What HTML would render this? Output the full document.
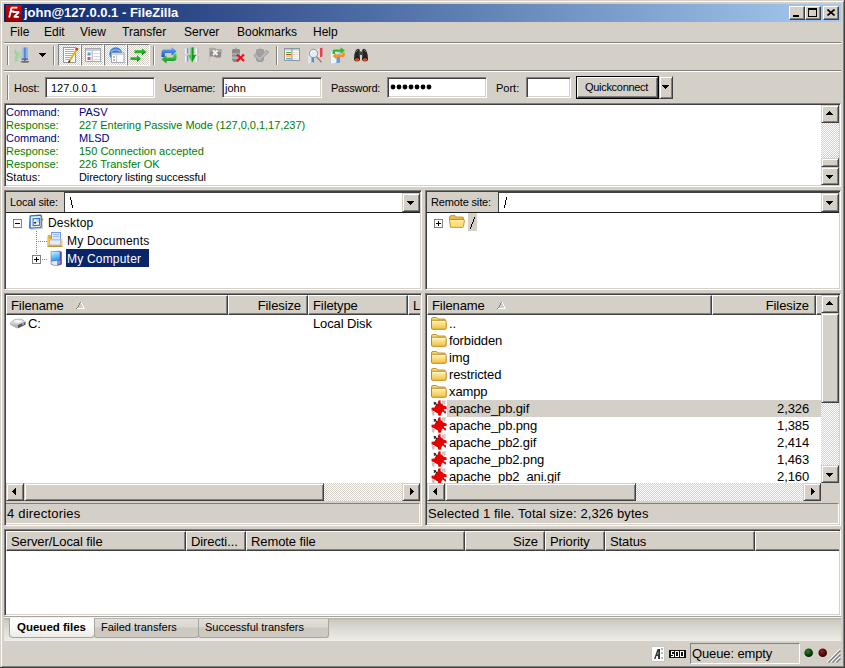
<!DOCTYPE html>
<html><head><meta charset="utf-8">
<style>
*{box-sizing:border-box}
html,body{margin:0;padding:0}
body{width:845px;height:668px;overflow:hidden;background:#D4D0C8;position:relative;font-family:"Liberation Sans",sans-serif;font-size:11px;color:#000}
.a{position:absolute}
.t{position:absolute;white-space:nowrap;line-height:13px}
.sunk{position:absolute;border:1px solid;border-color:#808080 #fff #fff #808080;box-shadow:inset 1px 1px #404040,inset -1px -1px #D4D0C8}
.rais{position:absolute;background:#D4D0C8;border:1px solid;border-color:#D4D0C8 #404040 #404040 #D4D0C8;box-shadow:inset 1px 1px #fff,inset -1px -1px #808080}
.rais2{position:absolute;background:#D4D0C8;border:1px solid;border-color:#fff #404040 #404040 #fff;box-shadow:inset -1px -1px #808080}
.hl{position:absolute;height:2px;border-top:1px solid #808080;border-bottom:1px solid #fff}
.vl{position:absolute;width:2px;border-left:1px solid #808080;border-right:1px solid #fff}
.dith{background-color:#fff;background-image:linear-gradient(45deg,#D4D0C8 25%,transparent 25%,transparent 75%,#D4D0C8 75%),linear-gradient(45deg,#D4D0C8 25%,transparent 25%,transparent 75%,#D4D0C8 75%);background-size:2px 2px;background-position:0 0,1px 1px}
.hdr{position:absolute;top:0;height:20px;background:#D4D0C8;border:1px solid;border-color:#fff #808080 #808080 #fff;box-shadow:inset 0 -1px #808080}
.arr-u{position:absolute;width:0;height:0;border-left:3.5px solid transparent;border-right:3.5px solid transparent;border-bottom:4px solid #000}
svg{position:absolute;display:block}
.hcell{position:absolute;background:#D4D0C8;border:1px solid;border-color:#fff #404040 #404040 #fff;box-shadow:inset -1px -1px #808080}
.hd{font-size:13px;line-height:15px;letter-spacing:-0.1px}
.rw{font-size:13px;line-height:15px;letter-spacing:-0.12px}
</style></head><body>
<!-- window frame -->
<div class="a" style="left:0;top:0;width:845px;height:668px;border-right:1px solid #404040;border-bottom:1px solid #404040"></div>
<div class="a" style="left:1px;top:1px;width:843px;height:666px;border:1px solid;border-color:#fff #808080 #808080 #fff"></div>

<!-- title bar -->
<div class="a" style="left:4px;top:4px;width:837px;height:18px;background:linear-gradient(to right,#0A246A,#A6CAF0)"></div>
<div class="t" style="left:24px;top:5px;font-size:13px;font-weight:bold;color:#fff;line-height:16px">john@127.0.0.1 - FileZilla</div>

<svg style="left:6px;top:5px" width="16" height="16" viewBox="0 0 16 16"><defs><linearGradient id="rg" x1="0" y1="0" x2="0" y2="1"><stop offset="0" stop-color="#d40000"/><stop offset="1" stop-color="#8e0000"/></linearGradient></defs><rect width="16" height="16" fill="url(#rg)"/><path d="M5.6 2.6H11.4M4.9 6.5H8.2M5.6 2.6L3.2 12.4" stroke="#fff" stroke-width="1.9" fill="none"/><path d="M7.2 7H13L8 11.8H12.8" stroke="#fff" stroke-width="1.8" fill="none" stroke-linejoin="bevel"/></svg>
<div class="rais2" style="left:789px;top:6px;width:16px;height:14px"><div class="a" style="left:3px;top:8px;width:6px;height:2px;background:#000"></div></div>
<div class="rais2" style="left:805px;top:6px;width:16px;height:14px"><div class="a" style="left:2px;top:1px;width:9px;height:9px;border:1px solid #000;border-top-width:2px"></div></div>
<div class="rais2" style="left:823px;top:6px;width:16px;height:14px"><svg style="left:3px;top:2px" width="8" height="7" viewBox="0 0 8 7"><path d="M0.5 0.5L7.5 6.5M7.5 0.5L0.5 6.5" stroke="#000" stroke-width="1.6"/></svg></div>

<!-- menu -->
<div class="t" style="left:10px;top:26px;font-size:12px;line-height:13px">File</div>
<div class="t" style="left:44px;top:26px;font-size:12px;line-height:13px">Edit</div>
<div class="t" style="left:80px;top:26px;font-size:12px;line-height:13px">View</div>
<div class="t" style="left:122px;top:26px;font-size:12px;line-height:13px">Transfer</div>
<div class="t" style="left:184px;top:26px;font-size:12px;line-height:13px">Server</div>
<div class="t" style="left:237px;top:26px;font-size:12px;line-height:13px">Bookmarks</div>
<div class="t" style="left:313px;top:26px;font-size:12px;line-height:13px">Help</div>

<div class="hl" style="left:4px;top:42px;width:837px"></div>
<div class="hl" style="left:4px;top:70px;width:837px"></div>
<!-- toolbar -->
<div class="vl" style="left:7px;top:46px;height:19px"></div>
<svg style="left:14px;top:47px" width="17" height="17" viewBox="0 0 17 17">
<path d="M0.5 2 L3 3.5 L5 4 L7.5 6 L6 8 L7.5 10 L5.5 11 L4.5 13 L2 14.5 L0.5 15.5 L1.5 12 L0.5 10.5 L2 8.5 L0.5 6 Z" fill="#9fcf9a" opacity="0.95"/>
<path d="M2 4 L4.5 5 L6 6.5 L4 8.5 L5.5 10.5 L3 12.5" fill="none" stroke="#c9e6c4" stroke-width="1"/>
<rect x="7.5" y="0.5" width="6.5" height="12" fill="#8fb4e6"/>
<rect x="10" y="0.5" width="1.8" height="12" fill="#5a87c9"/>
<rect x="7.5" y="0.5" width="1" height="12" fill="#b9d4f3"/>
<rect x="7.5" y="11.5" width="6.5" height="1.3" fill="#3c5fa8"/>
<rect x="10.2" y="12.8" width="1.2" height="1.5" fill="#555"/>
<ellipse cx="11" cy="14.8" rx="4.3" ry="1" fill="#6b6b6b"/>
</svg>
<svg style="left:39px;top:53px" width="7" height="4" shape-rendering="crispEdges"><path d="M0 0H7V1H6V2H5V3H4V4H3V3H2V2H1V1H0Z" fill="#000"/></svg>
<div class="vl" style="left:53px;top:46px;height:19px"></div>

<div class="a dith" style="left:58px;top:44px;width:23px;height:22px;border:1px solid;border-color:#808080 #fff #fff #808080"></div>
<div class="a dith" style="left:81px;top:44px;width:23px;height:22px;border:1px solid;border-color:#808080 #fff #fff #808080"></div>
<div class="a dith" style="left:104px;top:44px;width:23px;height:22px;border:1px solid;border-color:#808080 #fff #fff #808080"></div>
<div class="a dith" style="left:127px;top:44px;width:23px;height:22px;border:1px solid;border-color:#808080 #fff #fff #808080"></div>
<!-- doc+pencil -->
<svg style="left:63px;top:47px" width="16" height="16" viewBox="0 0 16 16">
<rect x="0.5" y="0.5" width="12" height="15" fill="#fff" stroke="#9a9a9a"/>
<path d="M2 2.5H11M2 4.5H11M2 6.5H11M2 8.5H11M2 10.5H9M2 12.5H7" stroke="#a7aac4" stroke-width="1"/>
<path d="M14.6 1.2L6.2 14.6" stroke="#f0b000" stroke-width="1.8"/>
<path d="M14.6 1.2L13.4 3.1" stroke="#c0401a" stroke-width="2.4"/>
<path d="M6.8 13.6L5.6 15.6" stroke="#333" stroke-width="1.5"/>
</svg>
<!-- window grid -->
<svg style="left:85px;top:48px" width="16" height="14" viewBox="0 0 16 14">
<rect x="0.5" y="0.5" width="15" height="13" fill="#fff" stroke="#a3a8b3"/>
<rect x="1" y="1" width="14" height="2" fill="#c8ccd4"/>
<rect x="6.5" y="3" width="1.5" height="10.5" fill="#c0c6d0"/>
<rect x="2.5" y="4.5" width="3" height="3" fill="#5b93d6"/>
<rect x="2.5" y="9" width="3" height="3" fill="#d7505a"/>
<path d="M8.5 5.5H15M8.5 8.5H15M8.5 11.5H15" stroke="#d2d5dc" stroke-width="1"/>
</svg>
<!-- globe window -->
<svg style="left:109px;top:47px" width="16" height="16" viewBox="0 0 16 16">
<circle cx="6.8" cy="6.8" r="6.5" fill="#3f7fd6"/>
<path d="M2 4.5Q6.8 1 11.5 4.5" stroke="#9fc3ef" stroke-width="1.2" fill="none"/>
<rect x="2.5" y="6" width="12.5" height="9.5" fill="#fff" stroke="#a3a8b3"/>
<rect x="3" y="6.5" width="11.5" height="1.5" fill="#d0d3da"/>
<rect x="7" y="8" width="1" height="7" fill="#c5cad3"/>
<rect x="4.3" y="9" width="1.5" height="2" fill="#89aee0"/>
<rect x="4.3" y="12" width="1.5" height="2" fill="#e88a90"/>
</svg>
<!-- green arrows -->
<svg style="left:130px;top:48px" width="17" height="15" viewBox="0 0 17 15">
<path d="M4.5 2.2H12V0.5L16.5 3.7L12 7V5.2H4.5Z" fill="#1fb81f"/>
<path d="M0.5 9.2H7V7.3L11 10.4L7 13.8V11.9H0.5Z" fill="#1fb81f"/>
<path d="M12 5.2V7L16.5 3.7Z" fill="#0d7a0d"/>
<path d="M7 11.9V13.8L11 10.4Z" fill="#0d7a0d"/>
</svg>
<div class="vl" style="left:153px;top:46px;height:19px"></div>
<!-- refresh -->
<svg style="left:161px;top:47px" width="16" height="17" viewBox="0 0 16 17">
<defs><linearGradient id="bl" x1="0" y1="0" x2="0" y2="1"><stop offset="0" stop-color="#6fb0ff"/><stop offset="1" stop-color="#1450c8"/></linearGradient><linearGradient id="gr" x1="0" y1="0" x2="0" y2="1"><stop offset="0" stop-color="#50e050"/><stop offset="1" stop-color="#0a8a1a"/></linearGradient></defs>
<path d="M0.5 10V5.5Q0.5 2.5 3.5 2.5H10.5V0L15.5 4.2L10.5 8.5V6H4Q3.8 6 3.8 6.5V10Z" fill="url(#bl)"/>
<path d="M15.5 6.5V11Q15.5 14 12.5 14H5.5V16.5L0.5 12.2L5.5 8V10.5H12Q12.2 10.5 12.2 10V6.5Z" fill="url(#gr)"/>
</svg>
<!-- process queue -->
<svg style="left:184px;top:47px" width="16" height="16" viewBox="0 0 16 16">
<path d="M1 1.5L4 1V6.5L1 7Z" fill="#e8f2fc"/><path d="M2.8 1.2L4.2 1V6.5L2.8 6.8Z" fill="#5d98e0"/>
<path d="M1 9L4 8.5V14.5L1 15Z" fill="#e8f2fc"/><path d="M2.8 8.7L4.2 8.5V14.5L2.8 14.8Z" fill="#5d98e0"/>
<path d="M11.5 1.5L14.5 1V6.5L11.5 7Z" fill="#fafafa"/><path d="M13.3 1.2L14.7 1V6.5L13.3 6.8Z" fill="#b0b0b0"/>
<path d="M11.5 9L14.5 8.5V14.5L11.5 15Z" fill="#fafafa"/><path d="M13.3 8.7L14.7 8.5V14.5L13.3 14.8Z" fill="#b0b0b0"/>
<path d="M6.5 0.5H9.5V8H12L8 15.5L4 8H6.5Z" fill="#3ad23a"/>
<path d="M8 0.5H9.5V8H12L8 15.5Z" fill="#139a22"/>
</svg>
<!-- cancel flag -->
<svg style="left:208px;top:47px" width="16" height="16" viewBox="0 0 16 16">
<path d="M1 1.5Q4 0 7 1.5T13.5 2L13 10Q10 11.5 7 10T1.5 10Z" fill="#8c8c8c"/>
<path d="M1 1.5Q4 0 7 1.5T13.5 2L13.3 5Q10 5.5 7 4.5T1.2 5Z" fill="#a8a8a8"/>
<path d="M1.3 1.5V15" stroke="#bdbdbd" stroke-width="0.8"/>
<path d="M5 3.5L9.5 8M9.5 3.5L5 8" stroke="#f4f4f4" stroke-width="1.8"/>
</svg>
<!-- disconnect -->
<svg style="left:231px;top:47px" width="16" height="16" viewBox="0 0 16 16">
<path d="M4.5 0.5H5.5V2H8L9 3V13L7.5 15H2.5L1 13V3L2 2H4.5Z" fill="#8a8a8a"/>
<path d="M1 6H9V8H1Z" fill="#a9a9a9"/>
<path d="M1 9.5H9V12H1Z" fill="#b4b4b4"/>
<path d="M6 7.5L13 14M13 7.5L6 14" stroke="#e8141e" stroke-width="2.3"/>
</svg>
<!-- reconnect -->
<svg style="left:253px;top:47px" width="16" height="16" viewBox="0 0 16 16">
<path d="M6.5 0.5H7.5V2H10L11 3V13L9.5 15H4.5L3 13V3L4 2H6.5Z" fill="#a0a0a0"/>
<path d="M0.8 8.5L3 6.5L6.5 10L13.5 3L15.6 5.2L6.5 14.3Z" fill="#b8b8b8" stroke="#8c8c8c" stroke-width="0.7"/>
</svg>
<div class="vl" style="left:276px;top:46px;height:19px"></div>
<!-- filter -->
<svg style="left:284px;top:48px" width="16" height="13" viewBox="0 0 16 13">
<rect x="0.5" y="0.5" width="15" height="12" fill="#fff" stroke="#8e96a2"/>
<rect x="1" y="1" width="14" height="1.5" fill="#c7ccd4"/>
<rect x="7.3" y="0.5" width="1.2" height="12" fill="#8e96a2"/>
<path d="M2 4.5H7" stroke="#3cc43c" stroke-width="1.2"/><path d="M2 6.6H7" stroke="#e33a3a" stroke-width="1.2"/><path d="M2 8.7H7" stroke="#f0d22a" stroke-width="1.2"/><path d="M2 10.8H7" stroke="#3b8fe0" stroke-width="1.2"/>
<path d="M9 4.5H14.5" stroke="#c8ecc8" stroke-width="1.2"/><path d="M9 6.6H14.5" stroke="#f3d0d0" stroke-width="1.2"/><path d="M9 8.7H14.5" stroke="#f6eeb8" stroke-width="1.2"/><path d="M9 10.8H14.5" stroke="#cfe2f6" stroke-width="1.2"/>
</svg>
<!-- compare -->
<svg style="left:307px;top:47px" width="17" height="17" viewBox="0 0 17 17">
<path d="M1 4L5 2.5V15.5L1 16.5Z" fill="#e4e4e6"/>
<path d="M4.5 10L7 9.5V16L5.8 14.8L4.5 16Z" fill="#4f8fd8"/>
<path d="M9.5 2L15.5 0.5V9.5L10 11Z" fill="#f2dada"/>
<path d="M12.8 1.2L15.5 0.5V9.5L13 10.2Z" fill="#e0404c"/>
<circle cx="6.5" cy="6.5" r="4.2" fill="#e6f2fb" fill-opacity="0.85" stroke="#909090" stroke-width="1"/>
<path d="M4 5.5Q5.5 3.5 8 4" stroke="#fff" stroke-width="0.9" fill="none"/>
<path d="M9.6 9.8L14.5 15.2" stroke="#888" stroke-width="1.3"/>
</svg>
<!-- sync -->
<svg style="left:330px;top:47px" width="16" height="17" viewBox="0 0 16 17">
<path d="M1 4.5L7.5 3.5V15.5L1 16.5Z" fill="#eef4fb"/>
<path d="M6.5 8L10 7.3V15.5L6.5 16.3Z" fill="#5e9be0"/>
<path d="M2.5 7V4.5Q2.5 2.5 4.5 2.5H10.5V0.2L15 3.5L10.5 6.8V4.8H5V7Z" fill="#2dbb2d"/>
<path d="M14.8 5.5V8Q14.8 10 12.8 10H6.5V12.3L2.5 9L6.5 5.7V7.7H12V5.5Z" fill="#f29228"/>
</svg>
<!-- binoculars -->
<svg style="left:353px;top:48px" width="16" height="14" viewBox="0 0 16 14">
<path d="M2.2 4Q3.2 0.8 5.5 0.8Q6.8 0.8 6.8 3V10.5H1.2Q0.8 7 2.2 4Z" fill="#262626"/>
<path d="M13.8 4Q12.8 0.8 10.5 0.8Q9.2 0.8 9.2 3V10.5H14.8Q15.2 7 13.8 4Z" fill="#262626"/>
<rect x="6.5" y="3.5" width="3" height="3.5" fill="#444"/>
<path d="M3.2 4Q4 2 5.5 1.8M12.8 4Q12 2 10.5 1.8" stroke="#8a8a8a" stroke-width="0.8" fill="none"/>
<ellipse cx="4" cy="11" rx="3" ry="2.3" fill="#1e1e1e"/>
<ellipse cx="12" cy="11" rx="3" ry="2.3" fill="#1e1e1e"/>
<ellipse cx="4" cy="11.6" rx="2.2" ry="1.3" fill="#f04a18"/>
<ellipse cx="12" cy="11.6" rx="2.2" ry="1.3" fill="#f04a18"/>
</svg>
<!-- quickconnect -->
<div class="vl" style="left:7px;top:75px;height:25px"></div>
<div class="t" style="left:14px;top:82px">Host:</div>
<div class="sunk" style="left:45px;top:77px;width:110px;height:21px;background:#fff"></div>
<div class="t" style="left:51px;top:82px">127.0.0.1</div>
<div class="t" style="left:164px;top:82px;letter-spacing:-0.3px">Username:</div>
<div class="sunk" style="left:222px;top:77px;width:100px;height:21px;background:#fff"></div>
<div class="t" style="left:225px;top:82px">john</div>
<div class="t" style="left:331px;top:82px;letter-spacing:-0.25px">Password:</div>
<div class="sunk" style="left:387px;top:77px;width:100px;height:21px;background:#fff"></div>
<svg style="left:390px;top:84px" width="44" height="6" viewBox="0 0 44 6"><g fill="#000"><circle cx="3" cy="3" r="2.4"/><circle cx="9" cy="3" r="2.4"/><circle cx="15" cy="3" r="2.4"/><circle cx="21" cy="3" r="2.4"/><circle cx="27" cy="3" r="2.4"/><circle cx="33" cy="3" r="2.4"/><circle cx="39" cy="3" r="2.4"/></g></svg>
<div class="t" style="left:496px;top:82px">Port:</div>
<div class="sunk" style="left:526px;top:77px;width:45px;height:21px;background:#fff"></div>
<div class="a" style="left:576px;top:76px;width:83px;height:23px;border:1px solid #000"><div class="rais" style="left:0;top:0;width:81px;height:21px;border-color:#fff #404040 #404040 #fff;box-shadow:inset -1px -1px #808080"></div></div>
<div class="t" style="left:585px;top:81px;letter-spacing:-0.3px">Quickconnect</div>
<div class="rais" style="left:659px;top:76px;width:14px;height:23px"><svg style="left:2px;top:8px" width="7" height="4" shape-rendering="crispEdges"><path d="M0 0H7V1H6V2H5V3H4V4H3V3H2V2H1V1H0Z" fill="#000"/></svg></div>

<!-- log -->
<div class="sunk" style="left:4px;top:103px;width:837px;height:84px;background:#fff"></div>

<div class="a" style="left:6px;top:105px;width:816px;height:80px;overflow:hidden;font-size:11px">
<div class="t" style="left:0px;top:1px;color:#000080">Command:</div><div class="t" style="left:73px;top:1px;color:#000080">PASV</div>
<div class="t" style="left:0px;top:14px;color:#008000">Response:</div><div class="t" style="left:73px;top:14px;color:#008000;letter-spacing:-0.03px">227 Entering Passive Mode (127,0,0,1,17,237)</div>
<div class="t" style="left:0px;top:27px;color:#000080">Command:</div><div class="t" style="left:73px;top:27px;color:#000080">MLSD</div>
<div class="t" style="left:0px;top:40px;color:#008000">Response:</div><div class="t" style="left:73px;top:40px;color:#008000">150 Connection accepted</div>
<div class="t" style="left:0px;top:53px;color:#008000">Response:</div><div class="t" style="left:73px;top:53px;color:#008000">226 Transfer OK</div>
<div class="t" style="left:0px;top:66px;color:#000">Status:</div><div class="t" style="left:73px;top:66px;color:#000;letter-spacing:-0.1px">Directory listing successful</div>
</div>
<!-- log scrollbar -->
<div class="a dith" style="left:821px;top:105px;width:18px;height:80px"></div>
<div class="rais" style="left:821px;top:105px;width:18px;height:18px"><svg style="left:4px;top:5px" width="7" height="4" shape-rendering="crispEdges"><path d="M3 0H4V1H5V2H6V3H7V4H0V3H1V2H2V1H3Z" fill="#000"/></svg></div>
<div class="rais" style="left:821px;top:158px;width:18px;height:9px"></div>
<div class="rais" style="left:821px;top:167px;width:18px;height:18px"><svg style="left:4px;top:7px" width="7" height="4" shape-rendering="crispEdges"><path d="M0 0H7V1H6V2H5V3H4V4H3V3H2V2H1V1H0Z" fill="#000"/></svg></div>
<!-- local site panel -->
<div class="sunk" style="left:4px;top:190px;width:418px;height:100px;background:#fff"></div>
<div class="a" style="left:6px;top:192px;width:59px;height:20px;background:#D4D0C8"></div>
<div class="t" style="left:10px;top:196px;letter-spacing:-0.15px">Local site:</div>
<div class="a" style="left:64px;top:192px;width:1px;height:20px;background:#404040"></div>
<svg style="left:70px;top:197px" width="3" height="11" shape-rendering="crispEdges"><rect x="0" y="0" width="1" height="3"/><rect x="1" y="3" width="1" height="5"/><rect x="2" y="8" width="1" height="3"/></svg>
<div class="a" style="left:64px;top:192px;width:356px;height:1px;background:#404040"></div><div class="rais" style="left:402px;top:193px;width:18px;height:19px"><svg style="left:4px;top:7px" width="7" height="4" shape-rendering="crispEdges"><path d="M0 0H7V1H6V2H5V3H4V4H3V3H2V2H1V1H0Z" fill="#000"/></svg></div>
<div class="a" style="left:6px;top:212px;width:414px;height:1px;background:#202020"></div>
<!-- tree -->
<div class="a" style="left:13px;top:219px;width:9px;height:9px;border:1px solid #808080;background:#fff"><div class="a" style="left:1px;top:3px;width:5px;height:1px;background:#000"></div></div>
<svg style="left:28px;top:214px" width="16" height="16" viewBox="0 0 16 16">
<path d="M2.5 15.5L14.5 14.5L14 2L13 1.5" fill="none" stroke="#9aa4b4" stroke-width="0.8" opacity="0.6"/>
<path d="M1.5 2.5Q1.5 1.3 2.8 1.2L12.5 0.6Q13.8 0.6 13.8 1.8V12.8Q13.8 14 12.6 14.1L2.8 14.8Q1 15 1 13.2Z" fill="#1f6fe0"/>
<path d="M2.8 3Q2.8 2.4 3.4 2.4L12.2 1.9Q12.6 1.9 12.6 2.3V12.3Q12.6 12.9 12 12.9L3.4 13.4Q2.7 13.4 2.7 12.7Z" fill="#fff6cc"/>
<path d="M4.5 4.2L12 3.8V11.8L4.6 12.2Z" fill="#2a72dc"/>
<path d="M5.6 5.3L11 5V10.8L5.7 11.1Z" fill="#f2f8ff"/>
<path d="M8 5.2L11 5V8L9.2 8.4Z" fill="#a8d0f6"/>
<path d="M6 8.8L8 8.2L7.6 9.2Z" fill="#111" stroke="#111" stroke-width="0.8"/>
<path d="M14 3.6L14.6 5L16 5.4L14.6 5.9L14 7.3L13.4 5.9L12 5.4L13.4 5Z" fill="#ef5a12"/>
</svg>
<div class="t" style="left:48px;top:216px;font-size:12px;line-height:14px;letter-spacing:0.2px">Desktop</div>
<div class="a" style="left:36px;top:231px;width:1px;height:24px;background-image:linear-gradient(#808080 50%,transparent 50%);background-size:1px 2px"></div>
<div class="a" style="left:38px;top:241px;width:9px;height:1px;background-image:linear-gradient(to right,#808080 50%,transparent 50%);background-size:2px 1px"></div>
<svg style="left:47px;top:232px" width="16" height="15" viewBox="0 0 16 15">
<path d="M0.5 4.5Q0.5 3 2 3H4V13.5H0.5Z" fill="#e7b23a"/>
<rect x="4.5" y="0.5" width="9" height="7" fill="#d9e8fb" stroke="#6b9fe0"/>
<path d="M6 2.5H12M6 4.5H12" stroke="#9cbbe6"/>
<path d="M0.5 7H15.5V13Q15.5 14.5 14 14.5H2Q0.5 14.5 0.5 13Z" fill="#f4c95a"/>
<rect x="2.5" y="8" width="11" height="5" fill="#e6ecf4" stroke="#a5b6c8" stroke-width="0.8"/>
<path d="M0.5 14.3H15.5" stroke="#b27c12"/>
</svg>
<div class="t" style="left:67px;top:234px;font-size:12px;line-height:14px;letter-spacing:0.2px">My Documents</div>
<div class="a" style="left:32px;top:255px;width:9px;height:9px;border:1px solid #808080;background:#fff"><div class="a" style="left:1px;top:3px;width:5px;height:1px;background:#000"></div><div class="a" style="left:3px;top:1px;width:1px;height:5px;background:#000"></div></div>
<div class="a" style="left:42px;top:259px;width:6px;height:1px;background-image:linear-gradient(to right,#808080 50%,transparent 50%);background-size:2px 1px"></div>
<svg style="left:50px;top:250px" width="13" height="16" viewBox="0 0 13 16">
<defs><linearGradient id="scr" x1="0" y1="0" x2="0.3" y2="1"><stop offset="0" stop-color="#c8f8ff"/><stop offset="1" stop-color="#2a98f4"/></linearGradient></defs>
<path d="M0.8 1.2L9.5 0.8L11.8 2V13.5Q11.5 15.6 6.5 15.6Q1 15.6 0.8 13.5Z" fill="#5a4aa8"/>
<path d="M1.2 1.5H9.8V10.2L1.2 11.2Z" fill="url(#scr)"/>
<path d="M1.3 11.5L7 10.8V15Q2 15 1.3 13.5Z" fill="#eceaf4"/>
<path d="M7 10.8L10.5 10.4V13Q10 14.6 7 15Z" fill="#9a90d0"/>
</svg>
<div class="a" style="left:66px;top:249px;width:83px;height:18px;background:#0A246A"></div>
<div class="t" style="left:67px;top:252px;font-size:12px;line-height:14px;color:#fff;letter-spacing:0.2px">My Computer</div>

<!-- remote site panel -->
<div class="sunk" style="left:425px;top:190px;width:416px;height:100px;background:#fff"></div>
<div class="a" style="left:427px;top:192px;width:71px;height:20px;background:#D4D0C8"></div>
<div class="t" style="left:431px;top:196px;letter-spacing:-0.15px">Remote site:</div>
<div class="a" style="left:498px;top:192px;width:1px;height:20px;background:#404040"></div>
<svg style="left:504px;top:197px" width="3" height="11" shape-rendering="crispEdges"><rect x="2" y="0" width="1" height="3"/><rect x="1" y="3" width="1" height="5"/><rect x="0" y="8" width="1" height="3"/></svg>
<div class="a" style="left:498px;top:192px;width:341px;height:1px;background:#404040"></div><div class="rais" style="left:821px;top:193px;width:18px;height:19px"><svg style="left:4px;top:7px" width="7" height="4" shape-rendering="crispEdges"><path d="M0 0H7V1H6V2H5V3H4V4H3V3H2V2H1V1H0Z" fill="#000"/></svg></div>
<div class="a" style="left:427px;top:212px;width:412px;height:1px;background:#202020"></div>
<div class="a" style="left:434px;top:219px;width:9px;height:9px;border:1px solid #808080;background:#fff"><div class="a" style="left:1px;top:3px;width:5px;height:1px;background:#000"></div><div class="a" style="left:3px;top:1px;width:1px;height:5px;background:#000"></div></div>
<svg style="left:449px;top:215px" width="16" height="13" viewBox="0 0 16 13">
<path d="M0.5 2.5Q0.5 0.5 2.5 0.5H6L7.5 2H13.5Q14.5 2 14.5 3V5H0.5Z" fill="#e9b949" stroke="#c08a1a" stroke-width="0.8"/>
<path d="M1.5 12.3L0.6 5.5Q0.5 4.5 1.5 4.5H14.5Q15.6 4.5 15.4 5.5L14.5 11.5Q14.3 12.4 13.5 12.4Z" fill="#fde07a" stroke="#c08a1a" stroke-width="0.9"/>
<path d="M2 6H14" stroke="#fff3c0" stroke-width="1"/>
</svg>
<div class="a" style="left:468px;top:213px;width:9px;height:18px;background:#D4D0C8"></div>
<svg style="left:470px;top:217px" width="5" height="12" shape-rendering="crispEdges"><rect x="0" y="10" width="1" height="2"/><rect x="1" y="7" width="1" height="3"/><rect x="2" y="5" width="1" height="2"/><rect x="3" y="2" width="1" height="3"/><rect x="4" y="0" width="1" height="2"/></svg>

<!-- local list -->
<div class="sunk" style="left:4px;top:293px;width:418px;height:233px;background:#D4D0C8"></div>
<div class="a" style="left:6px;top:315px;width:414px;height:168px;background:#fff"></div>
<div class="hcell" style="left:6px;top:295px;width:222px;height:20px"></div><div class="hcell" style="left:228px;top:295px;width:80px;height:20px"></div><div class="hcell" style="left:308px;top:295px;width:100px;height:20px"></div><div class="a" style="left:408px;top:295px;width:12px;height:20px;overflow:hidden"><div class="hcell" style="left:0;top:0;width:60px;height:20px"></div></div>
<div class="t hd" style="left:11px;top:298px">Filename</div>
<svg style="left:76px;top:302px" width="9" height="7" shape-rendering="crispEdges"><rect x="4" y="0" width="1" height="1" fill="#808080"/><rect x="5" y="0" width="1" height="1" fill="#fff"/><rect x="3" y="1" width="1" height="1" fill="#808080"/><rect x="5" y="1" width="1" height="1" fill="#fff"/><rect x="3" y="2" width="1" height="1" fill="#808080"/><rect x="6" y="2" width="1" height="1" fill="#fff"/><rect x="2" y="3" width="1" height="1" fill="#808080"/><rect x="6" y="3" width="1" height="1" fill="#fff"/><rect x="2" y="4" width="1" height="1" fill="#808080"/><rect x="7" y="4" width="1" height="1" fill="#fff"/><rect x="1" y="5" width="1" height="1" fill="#808080"/><rect x="7" y="5" width="1" height="1" fill="#fff"/><rect x="0" y="6" width="1" height="1" fill="#808080"/><rect x="8" y="6" width="1" height="1" fill="#fff"/><rect x="1" y="6" width="8" height="1" fill="#fff"/></svg>
<div class="t hd" style="left:228px;top:298px;width:73px;text-align:right">Filesize</div>
<div class="t hd" style="left:313px;top:298px">Filetype</div>
<div class="t hd" style="left:413px;top:298px">L</div>
<svg style="left:10px;top:318px" width="16" height="11" viewBox="0 0 16 11"><path d="M0.5 4.5L4.5 1.5L11.5 1L15.5 4L8 7L0.5 6.5Z" fill="#d4d4d4" stroke="#9a9a9a" stroke-width="0.5"/><path d="M3.5 3.5L6 2.2H11L12.5 3.5L8 5Z" fill="#fafafa"/><path d="M0.5 4.5V7L6.5 10.2H8V7L0.5 6.5Z" fill="#b4b4b4"/><path d="M8 7L15.5 4V6.8L8 10.2Z" fill="#555"/><circle cx="13" cy="6" r="1" fill="#a0a8ff"/></svg>
<div class="t rw" style="left:28px;top:316px">C:</div>
<div class="t rw" style="left:313px;top:316px">Local Disk</div>
<div class="a dith" style="left:6px;top:483px;width:414px;height:18px"></div>
<div class="rais" style="left:6px;top:483px;width:18px;height:18px"><svg style="left:5px;top:4px" width="4" height="7" shape-rendering="crispEdges"><path d="M0 3H1V2H2V1H3V0H4V7H3V6H2V5H1V4H0Z" fill="#000"/></svg></div>
<div class="rais" style="left:24px;top:483px;width:300px;height:18px"></div>
<div class="rais" style="left:402px;top:483px;width:18px;height:18px"><svg style="left:7px;top:4px" width="4" height="7" shape-rendering="crispEdges"><path d="M0 0H1V1H2V2H3V3H4V4H3V5H2V6H1V7H0Z" fill="#000"/></svg></div>
<div class="a" style="left:6px;top:503px;width:414px;height:21px;border-top:1px solid #808080;border-right:1px solid #fff;border-bottom:1px solid #fff"></div>
<div class="t rw" style="left:7px;top:506px;letter-spacing:0.2px">4 directories</div>
<!-- remote list -->
<div class="sunk" style="left:425px;top:293px;width:416px;height:233px;background:#D4D0C8"></div>
<div class="a" style="left:427px;top:315px;width:394px;height:168px;background:#fff"></div>
<div class="hcell" style="left:427px;top:295px;width:285px;height:20px"></div><div class="hcell" style="left:712px;top:295px;width:104px;height:20px"></div><div class="a" style="left:816px;top:295px;width:5px;height:20px;overflow:hidden"><div class="hcell" style="left:0;top:0;width:60px;height:20px"></div></div>
<div class="t hd" style="left:432px;top:298px">Filename</div>
<svg style="left:497px;top:302px" width="9" height="7" shape-rendering="crispEdges"><rect x="4" y="0" width="1" height="1" fill="#808080"/><rect x="5" y="0" width="1" height="1" fill="#fff"/><rect x="3" y="1" width="1" height="1" fill="#808080"/><rect x="5" y="1" width="1" height="1" fill="#fff"/><rect x="3" y="2" width="1" height="1" fill="#808080"/><rect x="6" y="2" width="1" height="1" fill="#fff"/><rect x="2" y="3" width="1" height="1" fill="#808080"/><rect x="6" y="3" width="1" height="1" fill="#fff"/><rect x="2" y="4" width="1" height="1" fill="#808080"/><rect x="7" y="4" width="1" height="1" fill="#fff"/><rect x="1" y="5" width="1" height="1" fill="#808080"/><rect x="7" y="5" width="1" height="1" fill="#fff"/><rect x="0" y="6" width="1" height="1" fill="#808080"/><rect x="8" y="6" width="1" height="1" fill="#fff"/><rect x="1" y="6" width="8" height="1" fill="#fff"/></svg>
<div class="t hd" style="left:712px;top:298px;width:97px;text-align:right">Filesize</div>
<svg width="0" height="0" style="position:absolute"><defs><linearGradient id="fg" x1="0" y1="0" x2="0" y2="1"><stop offset="0" stop-color="#fff6b8"/><stop offset="1" stop-color="#f0c040"/></linearGradient><symbol id="fold" viewBox="0 0 16 13"><path d="M0.5 2Q0.5 0.5 2 0.5H5.5L7 2H13Q14.5 2 14.5 3.5V4H0.5Z" fill="#f7dc7a" stroke="#c28a1c" stroke-width="0.9"/><path d="M0.5 4Q0.5 3.2 1.5 3.2H14Q15.2 3.2 15.2 4.5V11Q15.2 12.3 14 12.3H1.8Q0.5 12.3 0.5 11Z" fill="url(#fg)" stroke="#c28a1c" stroke-width="1"/><path d="M2 4.6H13.8" stroke="#fffbe0" stroke-width="0.8"/></symbol><symbol id="apa" viewBox="0 0 16 16"><path d="M11 0.5H15.5L13.5 2.5H15.5L13 5.5L12.5 3.5L11 4Z" fill="#c4c4c4"/><path d="M0.5 10.5L3 10L2 12.5H4.5L1 15.5Z" fill="#cfcfcf"/><path d="M1.5 12.5L3.8 11.5L2.5 14.5H4.5L2 16" fill="#b8b8b8"/><path d="M7.5 0.5L9.5 0.3L9.7 3.3L11.5 4.2L12.5 5.5L15.5 6.6L15.8 8.7L12.8 9.2L13 10.5L15 11.5L14 12.8L11.5 11.6L10.5 13.2L9.7 15.8L7.5 15.8L6.8 13.2L5 12.5L3.5 11.5L0.5 10L0.6 7.8L3.5 7.5L4.5 5.5L6.5 4L7 2Z" fill="#e80000"/><path d="M2.8 2.2L6.2 5.2M3 4.5L5 2.5" stroke="#1a1a1a" stroke-width="1.1"/><circle cx="14.2" cy="12.5" r="0.9" fill="#e80000"/></symbol></defs></svg>
<div class="a" style="left:447px;top:400px;width:374px;height:17px;background:#D4D0C8"></div>
<svg style="left:431px;top:317px" width="16" height="13"><use href="#fold"/></svg>
<div class="t rw" style="left:449px;top:316px">..</div>
<svg style="left:431px;top:334px" width="16" height="13"><use href="#fold"/></svg>
<div class="t rw" style="left:449px;top:333px">forbidden</div>
<svg style="left:431px;top:351px" width="16" height="13"><use href="#fold"/></svg>
<div class="t rw" style="left:449px;top:350px">img</div>
<svg style="left:431px;top:368px" width="16" height="13"><use href="#fold"/></svg>
<div class="t rw" style="left:449px;top:367px">restricted</div>
<svg style="left:431px;top:385px" width="16" height="13"><use href="#fold"/></svg>
<div class="t rw" style="left:449px;top:384px">xampp</div>
<svg style="left:431px;top:400px" width="16" height="16"><use href="#apa"/></svg>
<div class="t rw" style="left:449px;top:401px">apache_pb.gif</div>
<div class="t rw" style="left:712px;top:401px;width:97px;text-align:right">2,326</div>
<svg style="left:431px;top:417px" width="16" height="16"><use href="#apa"/></svg>
<div class="t rw" style="left:449px;top:418px">apache_pb.png</div>
<div class="t rw" style="left:712px;top:418px;width:97px;text-align:right">1,385</div>
<svg style="left:431px;top:434px" width="16" height="16"><use href="#apa"/></svg>
<div class="t rw" style="left:449px;top:435px">apache_pb2.gif</div>
<div class="t rw" style="left:712px;top:435px;width:97px;text-align:right">2,414</div>
<svg style="left:431px;top:451px" width="16" height="16"><use href="#apa"/></svg>
<div class="t rw" style="left:449px;top:452px">apache_pb2.png</div>
<div class="t rw" style="left:712px;top:452px;width:97px;text-align:right">1,463</div>
<svg style="left:431px;top:468px" width="16" height="16"><use href="#apa"/></svg>
<div class="t rw" style="left:449px;top:469px">apache_pb2_ani.gif</div>
<div class="t rw" style="left:712px;top:469px;width:97px;text-align:right">2,160</div>
<div class="a dith" style="left:821px;top:295px;width:18px;height:188px"></div>
<div class="rais" style="left:821px;top:295px;width:18px;height:18px"><svg style="left:4px;top:5px" width="7" height="4" shape-rendering="crispEdges"><path d="M3 0H4V1H5V2H6V3H7V4H0V3H1V2H2V1H3Z" fill="#000"/></svg></div>
<div class="rais" style="left:821px;top:313px;width:18px;height:90px"></div>
<div class="rais" style="left:821px;top:465px;width:18px;height:18px"><svg style="left:4px;top:7px" width="7" height="4" shape-rendering="crispEdges"><path d="M0 0H7V1H6V2H5V3H4V4H3V3H2V2H1V1H0Z" fill="#000"/></svg></div>
<div class="a dith" style="left:427px;top:483px;width:394px;height:18px"></div>
<div class="rais" style="left:427px;top:483px;width:18px;height:18px"><svg style="left:5px;top:4px" width="4" height="7" shape-rendering="crispEdges"><path d="M0 3H1V2H2V1H3V0H4V7H3V6H2V5H1V4H0Z" fill="#000"/></svg></div>
<div class="rais" style="left:445px;top:483px;width:191px;height:18px"></div>
<div class="rais" style="left:803px;top:483px;width:18px;height:18px"><svg style="left:7px;top:4px" width="4" height="7" shape-rendering="crispEdges"><path d="M0 0H1V1H2V2H3V3H4V4H3V5H2V6H1V7H0Z" fill="#000"/></svg></div>
<div class="a" style="left:427px;top:503px;width:412px;height:21px;border-top:1px solid #808080;border-right:1px solid #fff;border-bottom:1px solid #fff"></div>
<div class="t rw" style="left:428px;top:506px;letter-spacing:0.08px">Selected 1 file. Total size: 2,326 bytes</div>

<!-- queue -->
<div class="sunk" style="left:4px;top:529px;width:837px;height:87px;background:#fff"></div>
<div class="hcell" style="left:6px;top:531px;width:180px;height:20px"></div>
<div class="hcell" style="left:186px;top:531px;width:60px;height:20px"></div>
<div class="hcell" style="left:246px;top:531px;width:219px;height:20px"></div>
<div class="hcell" style="left:465px;top:531px;width:80px;height:20px"></div>
<div class="hcell" style="left:545px;top:531px;width:60px;height:20px"></div>
<div class="hcell" style="left:605px;top:531px;width:150px;height:20px"></div>
<div class="a" style="left:755px;top:531px;width:84px;height:20px;overflow:hidden"><div class="hcell" style="left:0;top:0;width:120px;height:20px"></div></div>
<div class="t hd" style="left:11px;top:534px">Server/Local file</div>
<div class="t hd" style="left:191px;top:534px">Directi...</div>
<div class="t hd" style="left:251px;top:534px">Remote file</div>
<div class="t hd" style="left:465px;top:534px;width:73px;text-align:right">Size</div>
<div class="t hd" style="left:550px;top:534px">Priority</div>
<div class="t hd" style="left:610px;top:534px">Status</div>
<div class="a" style="left:4px;top:616px;width:837px;height:1px;background:#A8A5A0"></div><div class="a" style="left:4px;top:617px;width:837px;height:1px;background:#F4F3EE"></div>
<div class="a" style="left:4px;top:618px;width:837px;height:23px;background:linear-gradient(#B9B6AF 0px,#B9B6AF 1px,#CCC8C0 2px,#DAD7D0 40%,#EEEDE8)"></div>
<div class="a" style="left:94px;top:619px;width:105px;height:19px;border:1px solid #A8A59E;border-top:none;border-radius:0 0 3px 3px;background:linear-gradient(#E2DFD8 0%,#DAD7D0 45%,#CCC8C0 50%,#CFCBC3 100%)"></div>
<div class="a" style="left:198px;top:619px;width:131px;height:19px;border:1px solid #A8A59E;border-top:none;border-radius:0 0 3px 3px;background:linear-gradient(#E2DFD8 0%,#DAD7D0 45%,#CCC8C0 50%,#CFCBC3 100%)"></div>
<div class="a" style="left:9px;top:618px;width:86px;height:20px;border:1px solid #A8A59E;border-top:none;border-radius:0 0 4px 4px;background:linear-gradient(#FFFFFF 0%,#FBFBF9 50%,#ECEAE5 100%)"></div>
<div class="t" style="left:17px;top:621px;font-weight:bold;font-size:11.5px">Queued files</div>
<div class="t" style="left:101px;top:621px">Failed transfers</div>
<div class="t" style="left:205px;top:621px">Successful transfers</div>
<svg style="left:651px;top:646px" width="14" height="16" viewBox="0 0 14 16"><rect x="0.5" y="0.5" width="13" height="15" fill="#fff" stroke="#c8c8c8"/><path d="M3 13L6.5 3H9L9 13H7V10H5.5L4.5 13Z" fill="#333"/><path d="M6.3 8.5H7.2V5Z" fill="#fff"/><path d="M11 2V4M11 6V8M10 12H12" stroke="#777" stroke-width="1"/></svg>
<svg style="left:669px;top:650px" width="17" height="8" viewBox="0 0 17 8" shape-rendering="crispEdges"><rect width="17" height="8" fill="#111"/><path d="M2 1.5H5M2 1.5V4H4.5V6.5H2" stroke="#fff" fill="none"/><rect x="6.5" y="1.5" width="3" height="5" stroke="#fff" fill="none"/><rect x="11.5" y="1.5" width="3" height="5" stroke="#fff" fill="none"/></svg>
<div class="a" style="left:690px;top:643px;width:110px;height:21px;border:1px solid;border-color:#808080 #fff #fff #808080"></div>
<div class="t rw" style="left:692px;top:646px">Queue: empty</div>
<svg style="left:804px;top:648px" width="24" height="10" viewBox="0 0 24 10"><defs><radialGradient id="gg" cx="0.4" cy="0.35" r="0.6"><stop offset="0" stop-color="#2f7f2f"/><stop offset="1" stop-color="#002800"/></radialGradient><radialGradient id="rr" cx="0.4" cy="0.35" r="0.6"><stop offset="0" stop-color="#962020"/><stop offset="1" stop-color="#380000"/></radialGradient></defs><circle cx="4.7" cy="4.7" r="4.3" fill="url(#gg)"/><circle cx="18.7" cy="4.7" r="4.3" fill="url(#rr)"/></svg>
<svg style="left:826px;top:648px" width="15" height="16" viewBox="0 0 15 16"><path d="M14 1L1 14M14 5L5 14M14 9L9 14" stroke="#fff" stroke-width="1"/><path d="M14.5 2.5L2.5 14.5M14.5 6.5L6.5 14.5M14.5 10.5L10.5 14.5" stroke="#808080" stroke-width="1.3"/></svg>
</body></html>
